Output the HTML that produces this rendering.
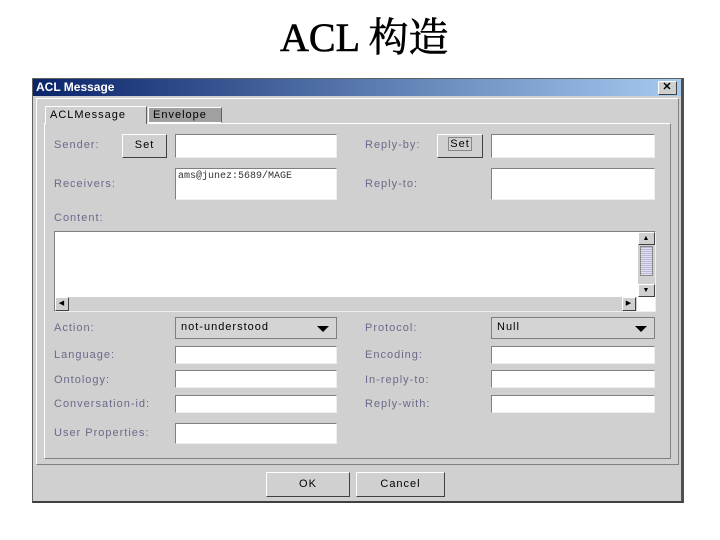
<!DOCTYPE html>
<html><head><meta charset="utf-8"><style>
*{margin:0;padding:0;box-sizing:border-box}
body{width:720px;height:540px;background:#fff;position:relative;overflow:hidden;font-family:"Liberation Sans",sans-serif}
.a{position:absolute}
.t{font-size:11px;color:#6a6a8a;letter-spacing:1px}
.f{background:#fff;border:1px solid #808080;border-right-color:#eee;border-bottom-color:#eee}
.b{background:#d0d0d0;border:1px solid #fff;border-right-color:#404040;border-bottom-color:#404040;font-size:11px;text-align:center;color:#000;letter-spacing:1px}
.c{background:#d4d4d4;border:1px solid #808080;font-size:11px;color:#000;padding:3px 5px;letter-spacing:1px}
.c:after{content:"";position:absolute;right:7px;top:8px;border-left:6px solid transparent;border-right:6px solid transparent;border-top:6px solid #000}
</style></head><body>
<div class="a" style="left:280px;top:6px;font-family:'Liberation Serif','Noto Serif CJK SC',serif;font-size:40px;color:#000;-webkit-text-stroke:0.6px #000;white-space:nowrap">ACL 构造</div>
<div class="a" style="left:32px;top:78px;width:652px;height:425px;background:#d0d0d0;border:1px solid #606060;border-right:3px solid #505050;border-bottom:2px solid #404040"></div>
<div class="a" style="left:33px;top:79px;width:648px;height:17px;background:linear-gradient(to right,#0a246a,#a6caf0)"></div>
<div class="a" style="left:36px;top:80px;font-size:12px;font-weight:bold;color:#fff">ACL Message</div>
<div class="a b" style="left:658px;top:81px;width:19px;height:14px;line-height:11px;font-weight:bold">✕</div>
<div class="a" style="left:36px;top:98px;width:643px;height:367px;border:1px solid #fff;border-right-color:#808080;border-bottom-color:#808080"></div>
<div class="a" style="left:44px;top:123px;width:627px;height:336px;border:1px solid #fff;border-right-color:#808080;border-bottom-color:#808080"></div>
<div class="a" style="left:45px;top:106px;width:102px;height:18px;background:#d0d0d0;border:1px solid #fff;border-bottom:none;border-right-color:#606060;font-size:11px;padding:2px 4px;letter-spacing:1px">ACLMessage</div>
<div class="a" style="left:148px;top:107px;width:74px;height:16px;background:#a0a0a0;border:1px solid #fff;border-right-color:#606060;font-size:11px;padding:1px 4px;letter-spacing:1px">Envelope</div>
<div class="a t" style="left:54px;top:139px">Sender:</div>
<div class="a b" style="left:122px;top:134px;width:45px;height:24px;line-height:21px">Set</div>
<div class="a f" style="left:175px;top:134px;width:162px;height:24px"></div>
<div class="a t" style="left:365px;top:139px">Reply-by:</div>
<div class="a b" style="left:437px;top:134px;width:46px;height:24px;padding-top:3px"><span style="border:1px solid #888;padding:0 1px">Set</span></div>
<div class="a f" style="left:491px;top:134px;width:164px;height:24px"></div>
<div class="a t" style="left:54px;top:178px">Receivers:</div>
<div class="a f" style="left:175px;top:168px;width:162px;height:32px;font-family:'Liberation Mono',monospace;font-size:10px;padding:2px 2px;color:#333">ams@junez:5689/MAGE</div>
<div class="a t" style="left:365px;top:178px">Reply-to:</div>
<div class="a f" style="left:491px;top:168px;width:164px;height:32px"></div>
<div class="a t" style="left:54px;top:212px">Content:</div>
<div class="a f" style="left:54px;top:231px;width:602px;height:81px"></div>
<div class="a" style="left:638px;top:232px;width:17px;height:65px;background:#d0d0d0;border-left:1px solid #ccc"></div>
<div class="a b" style="left:638px;top:232px;width:17px;height:13px;font-size:7px;line-height:11px">▲</div>
<div class="a" style="left:640px;top:246px;width:13px;height:30px;background:repeating-linear-gradient(#b8b8d8 0 1px,#e0e0f0 1px 2px);border:1px solid #888"></div>
<div class="a b" style="left:638px;top:284px;width:17px;height:13px;font-size:7px;line-height:11px">▼</div>
<div class="a" style="left:55px;top:297px;width:582px;height:14px;background:#d0d0d0"></div>
<div class="a b" style="left:55px;top:297px;width:14px;height:14px;font-size:7px;line-height:12px">◀</div>
<div class="a b" style="left:622px;top:297px;width:14px;height:14px;font-size:7px;line-height:12px">▶</div>
<div class="a t" style="left:54px;top:322px">Action:</div>
<div class="a c" style="left:175px;top:317px;width:162px;height:22px">not-understood</div>
<div class="a t" style="left:365px;top:322px">Protocol:</div>
<div class="a c" style="left:491px;top:317px;width:164px;height:22px">Null</div>
<div class="a t" style="left:54px;top:349px">Language:</div>
<div class="a f" style="left:175px;top:346px;width:162px;height:18px"></div>
<div class="a t" style="left:365px;top:349px">Encoding:</div>
<div class="a f" style="left:491px;top:346px;width:164px;height:18px"></div>
<div class="a t" style="left:54px;top:374px">Ontology:</div>
<div class="a f" style="left:175px;top:370px;width:162px;height:18px"></div>
<div class="a t" style="left:365px;top:374px">In-reply-to:</div>
<div class="a f" style="left:491px;top:370px;width:164px;height:18px"></div>
<div class="a t" style="left:54px;top:398px">Conversation-id:</div>
<div class="a f" style="left:175px;top:395px;width:162px;height:18px"></div>
<div class="a t" style="left:365px;top:398px">Reply-with:</div>
<div class="a f" style="left:491px;top:395px;width:164px;height:18px"></div>
<div class="a t" style="left:54px;top:427px">User Properties:</div>
<div class="a f" style="left:175px;top:423px;width:162px;height:21px"></div>
<div class="a b" style="left:266px;top:472px;width:84px;height:25px;line-height:22px;border-color:#fff #404040 #404040 #fff">OK</div>
<div class="a b" style="left:356px;top:472px;width:89px;height:25px;line-height:22px">Cancel</div>
</body></html>
